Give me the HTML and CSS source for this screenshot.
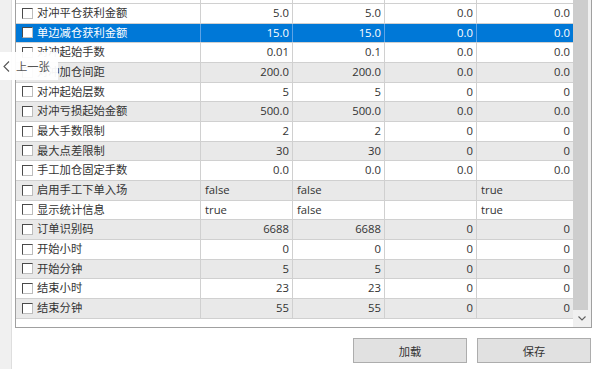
FILE: index.html
```html
<!DOCTYPE html>
<html lang="zh-CN">
<head>
    <meta charset="UTF-8">
    <title>参数设置</title>
    <link rel="stylesheet" href="styles.css">
</head>
<body>
    <div class="window">
        <div class="side"></div>
        <div class="main">
            <div class="grid">
                <div class="rows">
                    <div class="row stub"><div class="cell"></div><div class="cell"></div><div class="cell"></div><div class="cell"></div><div class="cell"></div></div>
                    <div class="row"><div class="cell name"><span class="check"></span>对冲平仓获利金额</div><div class="cell">5.0</div><div class="cell">5.0</div><div class="cell">0.0</div><div class="cell">0.0</div></div>
                    <div class="row selected"><div class="cell name"><span class="check"></span>单边减仓获利金额</div><div class="cell">15.0</div><div class="cell">15.0</div><div class="cell">0.0</div><div class="cell">0.0</div></div>
                    <div class="row"><div class="cell name"><span class="check"></span>对冲起始手数</div><div class="cell">0.01</div><div class="cell">0.1</div><div class="cell">0.0</div><div class="cell">0.0</div></div>
                    <div class="row alt"><div class="cell name"><span class="check"></span>对冲加仓间距</div><div class="cell">200.0</div><div class="cell">200.0</div><div class="cell">0.0</div><div class="cell">0.0</div></div>
                    <div class="row"><div class="cell name"><span class="check"></span>对冲起始层数</div><div class="cell">5</div><div class="cell">5</div><div class="cell">0</div><div class="cell">0</div></div>
                    <div class="row alt"><div class="cell name"><span class="check"></span>对冲亏损起始金额</div><div class="cell">500.0</div><div class="cell">500.0</div><div class="cell">0.0</div><div class="cell">0.0</div></div>
                    <div class="row"><div class="cell name"><span class="check"></span>最大手数限制</div><div class="cell">2</div><div class="cell">2</div><div class="cell">0</div><div class="cell">0</div></div>
                    <div class="row alt"><div class="cell name"><span class="check"></span>最大点差限制</div><div class="cell">30</div><div class="cell">30</div><div class="cell">0</div><div class="cell">0</div></div>
                    <div class="row"><div class="cell name"><span class="check"></span>手工加仓固定手数</div><div class="cell">0.0</div><div class="cell">0.0</div><div class="cell">0.0</div><div class="cell">0.0</div></div>
                    <div class="row alt"><div class="cell name"><span class="check"></span>启用手工下单入场</div><div class="cell text">false</div><div class="cell text">false</div><div class="cell text"></div><div class="cell text">true</div></div>
                    <div class="row"><div class="cell name"><span class="check"></span>显示统计信息</div><div class="cell text">true</div><div class="cell text">false</div><div class="cell text"></div><div class="cell text">true</div></div>
                    <div class="row alt"><div class="cell name"><span class="check"></span>订单识别码</div><div class="cell">6688</div><div class="cell">6688</div><div class="cell">0</div><div class="cell">0</div></div>
                    <div class="row"><div class="cell name"><span class="check"></span>开始小时</div><div class="cell">0</div><div class="cell">0</div><div class="cell">0</div><div class="cell">0</div></div>
                    <div class="row alt"><div class="cell name"><span class="check"></span>开始分钟</div><div class="cell">5</div><div class="cell">5</div><div class="cell">0</div><div class="cell">0</div></div>
                    <div class="row"><div class="cell name"><span class="check"></span>结束小时</div><div class="cell">23</div><div class="cell">23</div><div class="cell">0</div><div class="cell">0</div></div>
                    <div class="row alt"><div class="cell name"><span class="check"></span>结束分钟</div><div class="cell">55</div><div class="cell">55</div><div class="cell">0</div><div class="cell">0</div></div>
                </div>
                <div class="vscroll">
                    <div class="thumb"></div>
                    <div class="arrow">
                        <svg width="8" height="5" viewBox="0 0 8 5"><polyline points="0.5,0.5 4,4 7.5,0.5" fill="none" stroke="#606060" stroke-width="1.1"/></svg>
                    </div>
                </div>
            </div>
            <div class="actions">
                <button type="button">加载</button>
                <button type="button">保存</button>
            </div>
        </div>
        <div class="prev-tip">
            <svg width="7" height="11" viewBox="0 0 7 11"><polyline points="6,0.5 1,5.5 6,10.5" fill="none" stroke="#555" stroke-width="1.1"/></svg>
            <span>上一张</span>
        </div>
    </div>
</body>
</html>
```

FILE: styles.css
```css
body {
    margin: 0;
    font-family: "Open Sans", "Noto Sans CJK SC", sans-serif;
    font-size: 11.3px;
    color: #333;
    background: #fff;
}
.window {
    display: flex;
    height: 369px;
    position: relative;
    overflow: hidden;
}
.side {
    width: 12px;
    background: #f0f0f0;
    border-right: 1px solid #dedede;
    box-sizing: border-box;
}
.main {
    width: 577px;
    margin-left: 3px;
}
.grid {
    display: flex;
    height: 328px;
    box-sizing: border-box;
    border: 1px solid #a0a0a0;
    border-top: none;
    background: #fff;
}
.rows {
    width: 557px;
}
.row {
    display: grid;
    grid-template-columns: 185px 92px 92px 92px 96px;
    height: 19.67px;
    line-height: 18.67px;
    box-sizing: border-box;
    border-bottom: 1px solid #d0d0d0;
}
.row.stub {
    height: 4px;
}
.row.alt {
    background: #e9e9e9;
}
.row.selected {
    background: #0078d7;
    color: #fff;
}
.cell {
    border-right: 1px solid #d0d0d0;
    padding: 0 3px 0 4px;
    text-align: right;
    white-space: nowrap;
    overflow: hidden;
}
.cell:last-child {
    border-right: none;
}
.row.selected .cell {
    border-right-color: #5ea3e6;
}
.cell.text {
    text-align: left;
}
.cell.name {
    display: flex;
    align-items: center;
    gap: 4px;
    padding-left: 6px;
    text-align: left;
}
.check {
    flex: none;
    width: 11px;
    height: 11px;
    box-sizing: border-box;
    background: #fff;
    border: 1px solid;
    border-color: #4a4a4a #bdbdbd #bdbdbd #4a4a4a;
}
.vscroll {
    width: 18px;
    background: #f0f0f0;
    display: flex;
    flex-direction: column;
}
.thumb {
    height: 310px;
    width: 15px;
    background: #cdcdcd;
}
.arrow {
    flex: 1;
    display: flex;
    justify-content: center;
    align-items: center;
}
.actions {
    display: flex;
    justify-content: flex-end;
    gap: 10px;
    margin-top: 10px;
    padding-right: 1px;
}
.actions button {
    width: 114px;
    height: 25px;
    padding: 0;
    border: 1px solid #adadad;
    background: #e1e1e1;
    font-family: inherit;
    font-size: 11.3px;
    color: #333;
}
.prev-tip {
    position: absolute;
    left: 0;
    top: 52px;
    width: 58px;
    height: 28px;
    box-sizing: border-box;
    padding-left: 3px;
    display: flex;
    align-items: center;
    gap: 6px;
    background: rgba(255, 255, 255, 0.94);
    color: #555;
}
```
